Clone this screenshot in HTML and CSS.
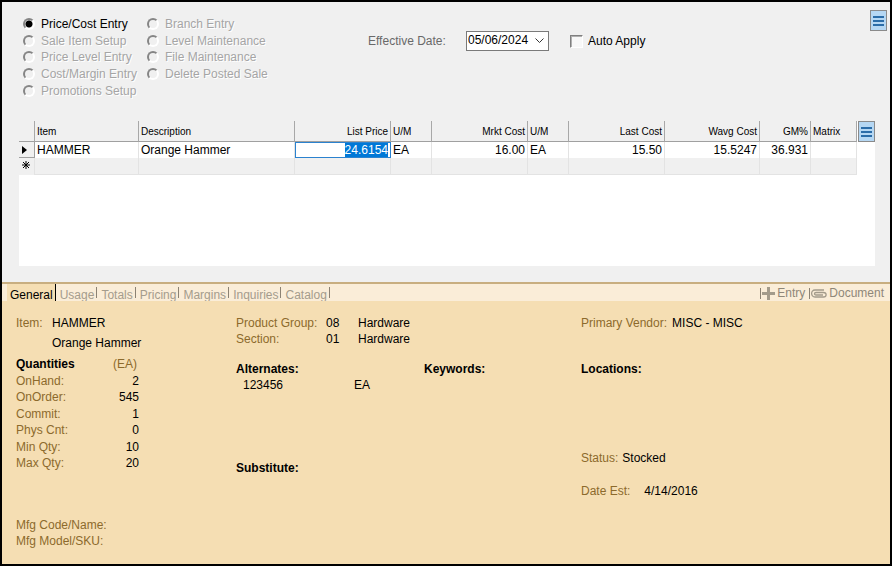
FILE: index.html
```html
<!DOCTYPE html>
<html lang="en">

<head>
  <meta charset="UTF-8">
  <meta name="viewport" content="width=device-width, initial-scale=1.0">
  <title>Price/Cost Entry</title>
  <link rel="stylesheet" href="styles.css">
</head>

<body>
  <main class="entry">
    <form class="options">
      <div class="modes">
        <label><input type="radio" name="mode" checked>Price/Cost Entry</label>
        <label><input type="radio" name="mode" disabled>Sale Item Setup</label>
        <label><input type="radio" name="mode" disabled>Price Level Entry</label>
        <label><input type="radio" name="mode" disabled>Cost/Margin Entry</label>
        <label><input type="radio" name="mode" disabled>Promotions Setup</label>
        <label><input type="radio" name="mode" disabled>Branch Entry</label>
        <label><input type="radio" name="mode" disabled>Level Maintenance</label>
        <label><input type="radio" name="mode" disabled>File Maintenance</label>
        <label><input type="radio" name="mode" disabled>Delete Posted Sale</label>
      </div>
      <div class="date-row">
        <label class="date-label" for="effective-date">Effective Date:</label>
        <select id="effective-date" class="date-select">
          <option>05/06/2024</option>
        </select>
        <label class="auto-apply"><input type="checkbox">Auto Apply</label>
      </div>
      <button type="button" class="menu-btn" aria-label="Menu">
        <svg width="11" height="12" viewBox="0 0 11 12"><path d="M0 1h11v2H0zM0 5h11v2H0zM0 9h11v2H0z" /></svg>
      </button>
    </form>

    <div class="grid-panel">
      <table class="price-grid">
        <colgroup>
          <col class="w-head">
          <col class="w-item">
          <col class="w-desc">
          <col class="w-money">
          <col class="w-um">
          <col class="w-money">
          <col class="w-um">
          <col class="w-money">
          <col class="w-wavg">
          <col class="w-gm">
          <col class="w-matrix">
        </colgroup>
        <thead>
          <tr>
            <th></th>
            <th>Item</th>
            <th>Description</th>
            <th class="num">List Price</th>
            <th>U/M</th>
            <th class="num">Mrkt Cost</th>
            <th>U/M</th>
            <th class="num">Last Cost</th>
            <th class="num">Wavg Cost</th>
            <th class="num">GM%</th>
            <th>Matrix</th>
          </tr>
        </thead>
        <tbody>
          <tr>
            <th class="row-head"><svg width="5" height="8" viewBox="0 0 5 8"><path d="M0 0l5 4-5 4z" /></svg></th>
            <td>HAMMER</td>
            <td>Orange Hammer</td>
            <td class="num editing"><span class="selected">24.6154</span></td>
            <td>EA</td>
            <td class="num">16.00</td>
            <td>EA</td>
            <td class="num">15.50</td>
            <td class="num">15.5247</td>
            <td class="num">36.931</td>
            <td></td>
          </tr>
          <tr class="new-row">
            <th><svg width="8" height="8" viewBox="0 0 8 8"><path d="M4 0v8M0 4h8M1 1l6 6M7 1L1 7" stroke="#000" /></svg></th>
            <td></td>
            <td></td>
            <td></td>
            <td></td>
            <td></td>
            <td></td>
            <td></td>
            <td></td>
            <td></td>
            <td></td>
          </tr>
        </tbody>
      </table>
      <button type="button" class="menu-btn" aria-label="Grid menu">
        <svg width="11" height="12" viewBox="0 0 11 12"><path d="M0 1h11v2H0zM0 5h11v2H0zM0 9h11v2H0z" /></svg>
      </button>
    </div>
  </main>

  <nav class="tabs">
    <button type="button" class="tab active">General</button>
    <button type="button" class="tab">Usage</button>
    <button type="button" class="tab">Totals</button>
    <button type="button" class="tab">Pricing</button>
    <button type="button" class="tab">Margins</button>
    <button type="button" class="tab">Inquiries</button>
    <button type="button" class="tab">Catalog</button>
    <div class="tab-actions">
      <button type="button" class="action">
        <svg width="13" height="13" viewBox="0 0 13 13"><path d="M5 0h3v5h5v3H8v5H5V8H0V5h5z" fill="#a39b8b" /></svg>
        Entry
      </button>
      <button type="button" class="action">
        <svg width="16" height="9" viewBox="0 0 16 9"><path d="M12 6H5C3 6 3 3.500 5 3.500h7.500C16 3.500 16 8 12.500 8H4C-.5 8-.5 1 4 1h9" fill="none" stroke="#a39b8b" stroke-width="1.300" /></svg>
        Document
      </button>
    </div>
  </nav>

  <section class="details">
    <div class="col-item">
      <div class="item-lines">
        <span class="label">Item:</span>
        <span>HAMMER</span>
        <span class="item-name">Orange Hammer</span>
      </div>
      <div class="quantities">
        <b>Quantities</b><span class="label unit">(EA)</span>
        <span class="label">OnHand:</span><span class="value">2</span>
        <span class="label">OnOrder:</span><span class="value">545</span>
        <span class="label">Commit:</span><span class="value">1</span>
        <span class="label">Phys Cnt:</span><span class="value">0</span>
        <span class="label">Min Qty:</span><span class="value">10</span>
        <span class="label">Max Qty:</span><span class="value">20</span>
      </div>
      <div class="mfg">
        <div class="label">Mfg Code/Name:</div>
        <div class="label">Mfg Model/SKU:</div>
      </div>
    </div>

    <div class="col-group">
      <div class="groups">
        <span class="label">Product Group:</span><span>08</span><span>Hardware</span>
        <span class="label">Section:</span><span>01</span><span>Hardware</span>
      </div>
      <div class="lookups">
        <div class="alternates">
          <b>Alternates:</b>
          <div class="alternate"><span>123456</span><span>EA</span></div>
        </div>
        <b>Keywords:</b>
      </div>
      <b>Substitute:</b>
    </div>

    <div class="col-vendor">
      <div class="pair"><span class="label">Primary Vendor:</span><span>MISC - MISC</span></div>
      <b class="locations">Locations:</b>
      <div class="pair status"><span class="label">Status:</span><span>Stocked</span></div>
      <div class="pair date-est"><span class="label">Date Est:</span><span>4/14/2016</span></div>
    </div>
  </section>
</body>

</html>
```
FILE: styles.css
```css
* {
  padding: 0;
  margin: 0;
  box-sizing: border-box;
}

body {
  min-height: 100vh;
  display: flex;
  flex-direction: column;
  border: 2px solid #000;
  background: #f0f0f0;
  color: #000;
  font-family: "Liberation Sans", Arial, sans-serif;
  font-size: 12px;
  line-height: 16px;
}

button,
select,
input {
  font: inherit;
  color: inherit;
  appearance: none;
}

svg {
  display: block;
}

.entry {
  height: 280px;
  padding: 8px 15px 16px 17px;
  display: flex;
  flex-direction: column;
}

/* Options */
.options {
  display: flex;
  align-items: flex-start;
  height: 111px;
  margin-right: -12px;
}

.modes {
  display: grid;
  grid-template-columns: 124px 124px;
  grid-template-rows: repeat(5, 1fr);
  grid-auto-flow: column;
  width: 349px;
  height: 83px;
  padding-left: 4px;
  margin-top: 6px;
}

.modes label {
  display: flex;
  align-items: center;
  gap: 6px;
  white-space: nowrap;
}

.modes label:has(:disabled) {
  color: #a5a5a5;
  text-shadow: 1px 1px 0 #fff;
}

.modes input {
  width: 12px;
  height: 12px;
  border: 2px solid;
  border-color: #858585 #fff #fff #858585;
  border-radius: 50%;
}

.modes input:checked {
  background: radial-gradient(circle, #000 3px, #f0f0f0 4px);
}

.date-row {
  display: flex;
  align-items: center;
  margin-top: 21px;
}

.date-label {
  width: 98px;
  color: #696969;
}

.date-select {
  width: 83px;
  height: 20px;
  padding: 0 0 2px 1px;
  border: 1px solid #7a7a7a;
  border-radius: 0;
  background: #fff url("data:image/svg+xml,%3Csvg xmlns='http://www.w3.org/2000/svg' width='9' height='6'%3E%3Cpath d='M0.5 0.5l4 4 4-4' fill='none' stroke='%23333'/%3E%3C/svg%3E") no-repeat right 4px center;
}

.auto-apply {
  display: flex;
  align-items: center;
  gap: 5px;
  margin-left: 21px;
}

.auto-apply input {
  width: 13px;
  height: 13px;
  border: 1px solid;
  border-color: #808080 #fff #fff #808080;
  box-shadow: inset 1px 1px 0 #b0b0b0;
  background: #f8f8f8;
}

.menu-btn {
  width: 17px;
  height: 21px;
  flex-shrink: 0;
  display: flex;
  align-items: center;
  justify-content: center;
  border: 1px solid #8a8a8a;
  background: #b5d7f3;
  fill: #2a6ca8;
}

.options .menu-btn {
  margin-left: auto;
}

/* Price grid */
.grid-panel {
  flex: 1;
  display: flex;
  align-items: flex-start;
  justify-content: space-between;
  background: #fff;
}

.price-grid {
  width: 838px;
  table-layout: fixed;
  border-collapse: separate;
  border-spacing: 0;
}

.w-head { width: 16px; }
.w-item { width: 104px; }
.w-desc { width: 156px; }
.w-money { width: 96px; }
.w-um { width: 41px; }
.w-wavg { width: 95px; }
.w-gm { width: 51px; }
.w-matrix { width: 46px; }

.price-grid th,
.price-grid td {
  padding: 0 2px;
  border-right: 1px solid #e3e3e3;
  text-align: left;
  line-height: 15px;
  white-space: nowrap;
}

.price-grid thead th {
  height: 21px;
  border-right-color: #a8a8a8;
  border-bottom: 1px solid #a0a0a0;
  background: #f0f0f0;
  font-size: 10px;
  font-weight: normal;
}

.price-grid tbody tr {
  height: 16px;
}

.price-grid tbody th {
  background: #f0f0f0;
  padding-left: 3px;
}

.price-grid .row-head {
  border-right-color: #a0a0a0;
  border-bottom: 1px solid #a0a0a0;
}

.price-grid .num {
  text-align: right;
}

.price-grid .editing {
  border: 1px solid #2b82cf;
  line-height: 14px;
}

.selected {
  display: inline-block;
  background: #0078d7;
  color: #fff;
}

.price-grid .new-row {
  height: 17px;
}

.price-grid .new-row th {
  padding-bottom: 3px;
}

.new-row td {
  background: #f0f0f0;
  border-bottom: 1px solid #e3e3e3;
}

/* Tabs */
.tabs {
  display: flex;
  height: 19px;
  padding-left: 5px;
  border-top: 2px solid #c8ae80;
  background: #faedd8;
}

.tab {
  padding: 5px 2px 0 4px;
  border: 0;
  background: linear-gradient(#8c8273, #8c8273) no-repeat right 3px / 1px 11px;
  color: #a59c8c;
  line-height: 12px;
}

.tab.active {
  padding-left: 3px;
  border-right: 1px solid #000;
  background: #f5deb3;
  color: #000;
}

.tab:not(.active) {
  padding-right: 3px;
}

.tab-actions {
  display: flex;
  align-items: flex-start;
  gap: 4px;
  margin-left: auto;
  padding: 2px 6px 0 0;
}

.action {
  display: flex;
  align-items: center;
  gap: 2px;
  padding-left: 2px;
  border: 0;
  background: linear-gradient(#8c8273, #8c8273) no-repeat left center / 1px 11px;
  color: #8f8778;
  line-height: 15px;
}

/* Item details */
.details {
  flex: 1;
  display: grid;
  grid-template-columns: 220px 345px 1fr;
  padding: 14px 14px 12px;
  background: #f5deb3;
}

.label {
  color: #8c6a2c;
}

.item-lines {
  display: grid;
  grid-template-columns: 36px 1fr;
  row-gap: 4px;
}

.item-name {
  grid-column: 2;
}

.quantities {
  display: grid;
  grid-template-columns: 97px 26px;
  grid-template-rows: repeat(7, 1fr);
  height: 116px;
  margin-top: 5px;
}

.value {
  text-align: right;
}

.mfg {
  margin-top: 45px;
}

.groups {
  display: grid;
  grid-template-columns: 90px 32px 1fr;
}

.lookups {
  display: flex;
  height: 99px;
  margin-top: 14px;
}

.alternates {
  width: 188px;
}

.alternate {
  display: grid;
  grid-template-columns: 111px 1fr;
  padding-left: 7px;
}

.pair {
  display: flex;
  gap: 5px;
}

.locations {
  display: block;
  margin-top: 30px;
}

.status {
  gap: 4px;
  margin-top: 73px;
}

.date-est {
  gap: 14px;
  margin-top: 17px;
}
```
